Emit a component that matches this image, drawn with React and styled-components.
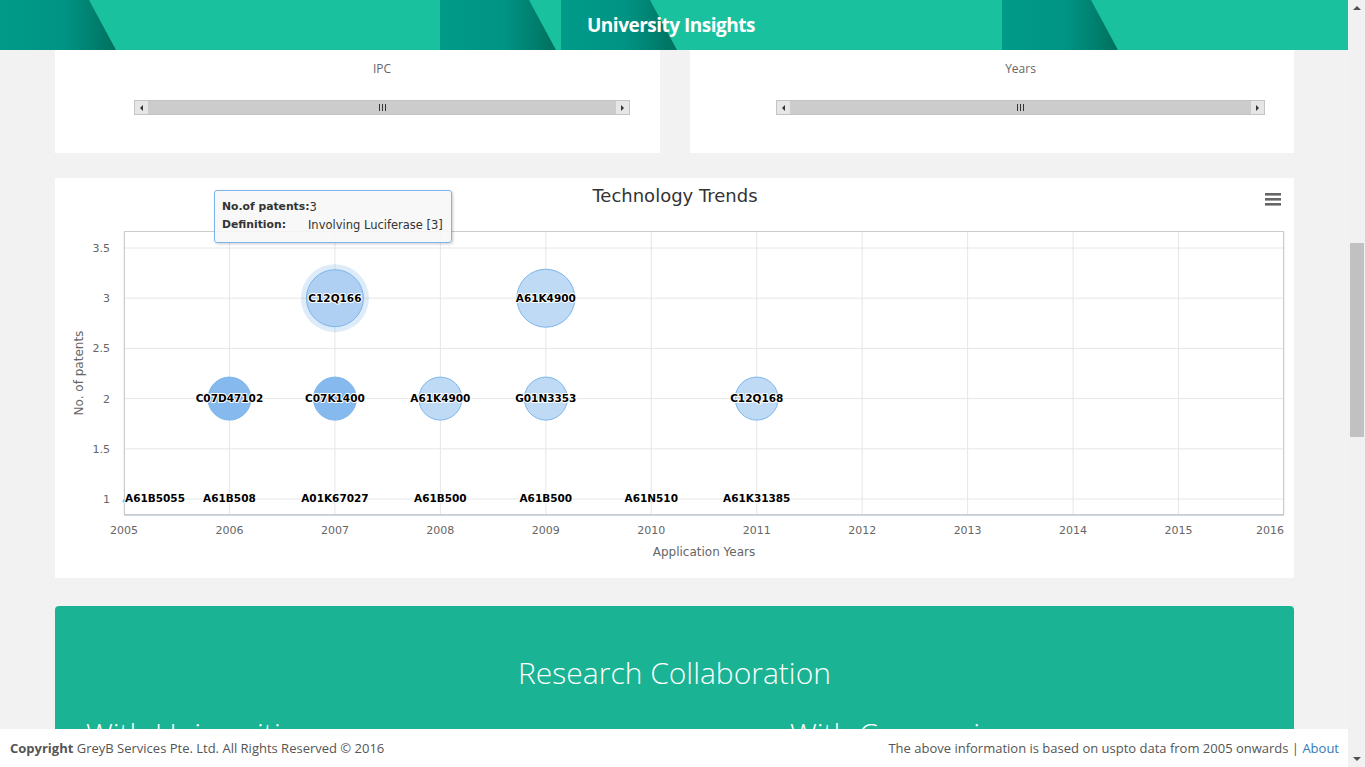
import React, { useLayoutEffect } from 'react'
import styled, { createGlobalStyle } from 'styled-components'

const GlobalStyle = createGlobalStyle`
  html {
    scrollbar-width: none;
  }
  html::-webkit-scrollbar,
  body::-webkit-scrollbar {
    display: none;
  }
  body {
    margin: 0;
    padding-right: 17px;
    background: #f2f2f2;
    font-family: "Open Sans", "Liberation Sans", sans-serif;
    color: #333;
  }
`

const Header = styled.header`
  position: fixed;
  top: 0;
  left: 0;
  right: 17px;
  height: 50px;
  background: #1ac19f;
  display: flex;
  align-items: center;
  justify-content: center;
  z-index: 10;
  overflow: hidden;
`
const HeaderArt = styled.svg`
  position: absolute;
  inset: 0;
  width: 100%;
  height: 100%;
`
const HeaderTitle = styled.h1`
  position: relative;
  margin: 0 0 0 -6px;
  font-size: 19px;
  font-weight: 700;
  color: #fff;
  letter-spacing: -0.5px;
`

const Page = styled.main`
  padding: 70px 54px 60px 55px;
  display: flex;
  flex-direction: column;
`
const TopRow = styled.div`
  display: grid;
  grid-template-columns: 605px 604px;
  column-gap: 30px;
`
const SmallCard = styled.section`
  height: 380px;
  background: #fff;
  display: flex;
  flex-direction: column;
  justify-content: flex-end;
  padding: 0 ${(p) => p.$right}px 38px ${(p) => p.$left}px;
  box-sizing: border-box;
`
const SmallTitle = styled.div`
  margin-top: 12px;
  flex: 1;
  text-align: center;
  font-size: 16px;
  color: #333;
`
const AxisTitle = styled.div`
  text-align: center;
  font-size: 12px;
  line-height: 16px;
  color: #666;
  margin-bottom: 23px;
`
const NavScroll = styled.div`
  display: flex;
  height: 15px;
  border: 1px solid #c4c4c4;
  background: #cccccc;
  box-sizing: border-box;
`
const NavButton = styled.div`
  width: 13px;
  background: #e6e6e6;
  display: flex;
  align-items: center;
  justify-content: center;
  &::after {
    content: '';
    border-top: 3px solid transparent;
    border-bottom: 3px solid transparent;
    ${(p) => (p.$dir === 'left' ? 'border-right: 3px solid #333;' : 'border-left: 3px solid #333;')}
  }
`
const NavGrip = styled.div`
  flex: 1;
  display: flex;
  align-items: center;
  justify-content: center;
  gap: 2px;
  & > span {
    width: 1px;
    height: 7px;
    background: #333;
  }
`

const ChartCard = styled.section`
  position: relative;
  margin-top: 25px;
  height: 400px;
  background: #fff;
`
const ChartSvg = styled.svg`
  display: block;
  font-family: "DejaVu Sans", "Liberation Sans", sans-serif;
`
const Tooltip = styled.div`
  position: absolute;
  left: 159px;
  top: 12px;
  width: 238px;
  height: 53px;
  box-sizing: border-box;
  padding: 7px 7px;
  background: rgba(247, 247, 247, 0.9);
  border: 1px solid #7cb5ec;
  border-radius: 3px;
  box-shadow: 1px 1px 3px rgba(0, 0, 0, 0.2);
  font-family: "DejaVu Sans", "Liberation Sans", sans-serif;
  font-size: 11.5px;
  line-height: 18px;
  color: #333;
`
const TipRow = styled.div`
  display: flex;
  gap: ${(p) => p.$gap || 0}px;
  white-space: nowrap;
  & b {
    font-weight: 700;
    font-size: 10.8px;
  }
`

const Collab = styled.section`
  margin-top: 28px;
  background: #1ab394;
  border-radius: 4px;
  padding: 47px 0 120px;
  color: #fff;
`
const CollabTitle = styled.h2`
  margin: 0;
  text-align: center;
  font-size: 30px;
  font-weight: 300;
  line-height: 40px;
`
const CollabCols = styled.div`
  margin-top: 23px;
  display: grid;
  grid-template-columns: 704px 1fr;
  padding-left: 31px;
`
const CollabHead = styled.h3`
  margin: 0;
  font-size: 30px;
  font-weight: 300;
  line-height: 36px;
`
const CollabText = styled.p`
  margin: 14px 0 0;
  font-size: 14px;
`

const Footer = styled.footer`
  position: fixed;
  left: 0;
  right: 17px;
  bottom: 0;
  height: 38px;
  background: #fff;
  display: flex;
  align-items: center;
  justify-content: space-between;
  padding: 0 9px 0 10px;
  font-size: 13px;
  color: #555;
  z-index: 10;
`
const FooterText = styled.span`
  & b {
    font-weight: 700;
  }
`
const About = styled.a`
  color: #337ab7;
  text-decoration: none;
`

const FakeScrollbar = styled.div`
  position: fixed;
  top: 0;
  right: 0;
  bottom: 0;
  width: 17px;
  background: #f1f1f1;
  display: flex;
  flex-direction: column;
  align-items: center;
  justify-content: space-between;
  z-index: 11;
`
const ScrollArrow = styled.div`
  width: 0;
  height: 0;
  margin: 6px 0;
  border-left: 4px solid transparent;
  border-right: 4px solid transparent;
  ${(p) => (p.$up ? 'border-bottom: 4px solid #505050;' : 'border-top: 4px solid #505050;')}
`
const ScrollThumb = styled.div`
  position: absolute;
  top: 243px;
  left: 2px;
  width: 14px;
  height: 194px;
  background: #c1c1c1;
`

const X0 = 69
const X1 = 1229
const YW = (X1 - X0) / 11
const xr = (yr) => X0 + (yr - 2005) * YW
const yv = (v) => 321 - (v - 1) * 100.4

const bubbles = [
  { yr: 2007, v: 3, r: 28.5, label: 'C12Q166', hover: true },
  { yr: 2009, v: 3, r: 29, label: 'A61K4900' },
  { yr: 2006, v: 2, r: 21.5, label: 'C07D47102', dark: true },
  { yr: 2007, v: 2, r: 21.5, label: 'C07K1400', dark: true },
  { yr: 2008, v: 2, r: 21.5, label: 'A61K4900' },
  { yr: 2009, v: 2, r: 21.5, label: 'G01N3353' },
  { yr: 2011, v: 2, r: 21.5, label: 'C12Q168' },
]
const singles = [
  { yr: 2005, label: 'A61B5055' },
  { yr: 2006, label: 'A61B508' },
  { yr: 2007, label: 'A01K67027' },
  { yr: 2008, label: 'A61B500' },
  { yr: 2009, label: 'A61B500' },
  { yr: 2010, label: 'A61N510' },
  { yr: 2011, label: 'A61K31385' },
]
const years = Array.from({ length: 12 }, (_, i) => 2005 + i)
const ticks = [1, 1.5, 2, 2.5, 3, 3.5]

function Label({ x, y, text, anchor = 'middle' }) {
  return (
    <text
      x={x}
      y={y}
      textAnchor={anchor}
      dominantBaseline="middle"
      fontSize="10.5"
      fontWeight="700"
      fill="#000"
      stroke="#fff"
      strokeWidth="2"
      strokeLinejoin="round"
      paintOrder="stroke"
    >
      {text}
    </text>
  )
}

function TrendsChart() {
  return (
    <ChartSvg width="1239" height="400" viewBox="0 0 1239 400">
      <text x="620" y="24" textAnchor="middle" fontSize="18" fill="#333">
        Technology Trends
      </text>
      <g fill="#666">
        <rect x="1210" y="15" width="16" height="2.6" />
        <rect x="1210" y="20" width="16" height="2.6" />
        <rect x="1210" y="25" width="16" height="2.6" />
      </g>

      {ticks.map((t) => (
        <line key={t} x1={X0} x2={X1} y1={yv(t)} y2={yv(t)} stroke="#e6e6e6" />
      ))}
      {years.map((yr) => (
        <line key={yr} x1={xr(yr)} x2={xr(yr)} y1="53" y2="337" stroke="#e6e6e6" />
      ))}
      <rect x={X0 + 0.5} y="53.5" width={X1 - X0 - 1} height="283" fill="none" stroke="#cccccc" />
      <line x1={X0} x2={X1} y1="337.5" y2="337.5" stroke="#ccd6eb" />

      {bubbles.map((b) => (
        <g key={b.label + b.yr + b.v}>
          {b.hover && <circle cx={xr(b.yr)} cy={yv(b.v)} r={b.r + 5.5} fill="rgba(124,181,236,0.25)" />}
          <circle
            cx={xr(b.yr)}
            cy={yv(b.v)}
            r={b.r}
            fill={b.dark ? '#86b9ed' : b.hover ? '#afd0f2' : '#bedaf5'}
            stroke="#7cb5ec"
            strokeWidth="1"
          />
        </g>
      ))}
      {singles.map((s) => (
        <circle key={s.yr} cx={xr(s.yr)} cy={yv(1) + 2} r="1.5" fill="#7cb5ec" />
      ))}

      {bubbles.map((b) => (
        <Label key={'l' + b.label + b.yr} x={xr(b.yr)} y={yv(b.v) + 0.5} text={b.label} />
      ))}
      {singles.map((s) =>
        s.yr === 2005 ? (
          <Label key={'s' + s.yr} x={X0 + 1} y={yv(1)} text={s.label} anchor="start" />
        ) : (
          <Label key={'s' + s.yr} x={xr(s.yr)} y={yv(1)} text={s.label} />
        )
      )}

      <g fontSize="11" fill="#666">
        {ticks.map((t) => (
          <text key={t} x="55" y={yv(t) + 4} textAnchor="end">
            {t}
          </text>
        ))}
        {years.map((yr) => (
          <text key={yr} x={yr === 2016 ? X1 : xr(yr)} y="356" textAnchor={yr === 2016 ? 'end' : 'middle'}>
            {yr}
          </text>
        ))}
      </g>
      <g fontSize="12" fill="#666">
        <text x="649" y="378" textAnchor="middle">
          Application Years
        </text>
        <text x="28" y="195" textAnchor="middle" transform="rotate(-90 28 195)">
          No. of patents
        </text>
      </g>
    </ChartSvg>
  )
}

function Navigator() {
  return (
    <NavScroll>
      <NavButton $dir="left" />
      <NavGrip>
        <span />
        <span />
        <span />
      </NavGrip>
      <NavButton $dir="right" />
    </NavScroll>
  )
}

function HeaderDecor() {
  const bands = [0, 440, 561, 1002]
  return (
    <HeaderArt viewBox="0 0 1348 50" preserveAspectRatio="none">
      <defs>
        <linearGradient id="band" x1="0" y1="0" x2="1" y2="0">
          <stop offset="0" stopColor="#009a89" />
          <stop offset="0.55" stopColor="#009484" />
          <stop offset="1" stopColor="#00705f" />
        </linearGradient>
      </defs>
      {bands.map((x) => (
        <polygon key={x} points={`${x},0 ${x + 89},0 ${x + 116},50 ${x},50`} fill="url(#band)" />
      ))}
    </HeaderArt>
  )
}

export default function App() {
  useLayoutEffect(() => {
    window.scrollTo(0, 297)
  }, [])

  return (
    <>
      <GlobalStyle />
      <Header>
        <HeaderDecor />
        <HeaderTitle>University Insights</HeaderTitle>
      </Header>

      <Page>
        <TopRow>
          <SmallCard $left={79} $right={30}>
            <SmallTitle>Top IPC Classes</SmallTitle>
            <AxisTitle>IPC</AxisTitle>
            <Navigator />
          </SmallCard>
          <SmallCard $left={86} $right={29}>
            <SmallTitle>Filing Trend</SmallTitle>
            <AxisTitle>Years</AxisTitle>
            <Navigator />
          </SmallCard>
        </TopRow>

        <ChartCard>
          <TrendsChart />
          <Tooltip>
            <TipRow>
              <b>No.of patents:</b>3
            </TipRow>
            <TipRow $gap={22}>
              <b>Definition:</b>
              <span>Involving Luciferase [3]</span>
            </TipRow>
          </Tooltip>
        </ChartCard>

        <Collab>
          <CollabTitle>Research Collaboration</CollabTitle>
          <CollabCols>
            <div>
              <CollabHead>With Universities</CollabHead>
              <CollabText>Joint filings with other academic institutions.</CollabText>
            </div>
            <div>
              <CollabHead>With Companies</CollabHead>
              <CollabText>Joint filings with industry partners.</CollabText>
            </div>
          </CollabCols>
        </Collab>
      </Page>

      <Footer>
        <FooterText>
          <b>Copyright</b> GreyB Services Pte. Ltd. All Rights Reserved © 2016
        </FooterText>
        <FooterText>
          The above information is based on uspto data from 2005 onwards | <About href="#">About</About>
        </FooterText>
      </Footer>

      <FakeScrollbar>
        <ScrollArrow $up />
        <ScrollThumb />
        <ScrollArrow />
      </FakeScrollbar>
    </>
  )
}
